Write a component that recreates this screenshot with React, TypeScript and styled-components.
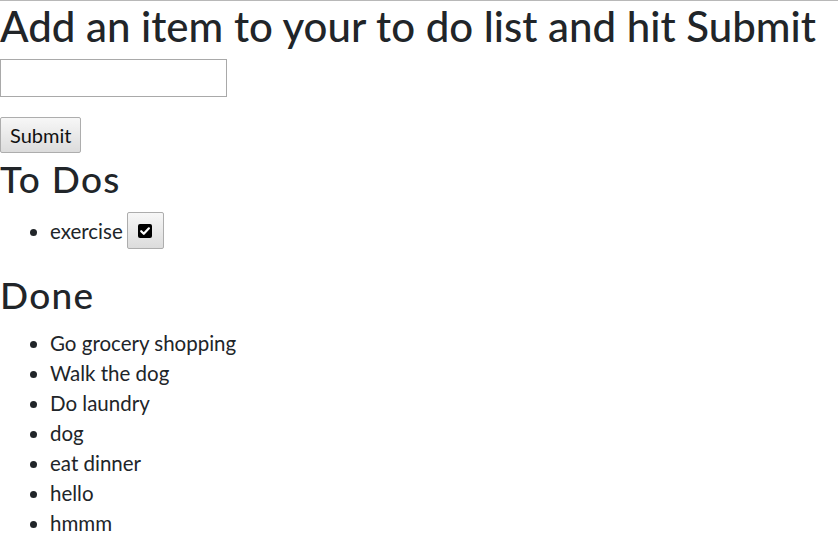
import React from "react";
import styled, { createGlobalStyle } from "styled-components";

const Global = createGlobalStyle`
  html, body { margin: 0; padding: 0; background: #fff; }
  body {
    font-family: Lato, "Segoe UI", "Liberation Sans", sans-serif;
    color: #212529;
    font-size: 20.5px;
    line-height: 30px;
  }
`;

const Page = styled.div`
  border-top: 1px solid #b8b8b8;
`;

const Title = styled.h1`
  font-size: 42px;
  font-weight: 500;
  line-height: 48px;
  margin: 1px 0 9px;
`;

const Form = styled.form`
  display: flex;
  flex-direction: column;
  align-items: flex-start;
  gap: 20px;
`;

const TextInput = styled.input`
  box-sizing: border-box;
  width: 227px;
  height: 38px;
  border: 1px solid #a9a9a9;
  border-radius: 0;
  padding: 2px 4px;
  font: inherit;
  margin: 0;
`;

const Button = styled.button`
  box-sizing: border-box;
  display: inline-flex;
  align-items: center;
  justify-content: center;
  margin: 0;
  padding: 0 9px;
  height: 36px;
  font-family: inherit;
  font-size: 20px;
  color: #111;
  background: linear-gradient(#f7f7f7, #dcdcdc);
  border: 1px solid #adadad;
  border-radius: 2px;
`;

const IconButton = styled(Button)`
  width: 37px;
  height: 37px;
  padding: 0;
  margin: 0 0 6px 4px;
  vertical-align: middle;
`;

const SectionTitle = styled.h2<{ $top: number; $bottom: number }>`
  font-size: 37px;
  font-weight: 500;
  line-height: 44px;
  letter-spacing: 1.3px;
  margin: ${(p) => p.$top}px 0 ${(p) => p.$bottom}px;
`;

const List = styled.ul<{ $bottom?: number }>`
  margin: 0 0 ${(p) => p.$bottom ?? 0}px;
  padding-left: 50px;
`;

const Item = styled.li`
  line-height: 30px;
`;

const CheckIcon = () => (
  <svg width="14" height="14" viewBox="0 0 14 14" aria-hidden="true">
    <rect x="0" y="0" width="14" height="14" rx="2" fill="#000" />
    <path d="M3.2 7.2 L5.8 9.8 L10.9 4.3" stroke="#fff" strokeWidth="2.2" fill="none" strokeLinecap="round" strokeLinejoin="round" />
  </svg>
);

const done = ["Go grocery shopping", "Walk the dog", "Do laundry", "dog", "eat dinner", "hello", "hmmm"];

export default function App() {
  return (
    <Page>
      <Global />
      <Title>Add an item to your to do list and hit Submit</Title>
      <Form onSubmit={(e) => e.preventDefault()}>
        <TextInput type="text" />
        <Button type="submit">Submit</Button>
      </Form>
      <SectionTitle $top={4} $bottom={11}>To Dos</SectionTitle>
      <List $bottom={18}>
        <Item>
          exercise
          <IconButton type="button" aria-label="done">
            <CheckIcon />
          </IconButton>
        </Item>
      </List>
      <SectionTitle $top={0} $bottom={11}>Done</SectionTitle>
      <List>
        {done.map((d) => (
          <Item key={d}>{d}</Item>
        ))}
      </List>
    </Page>
  );
}
